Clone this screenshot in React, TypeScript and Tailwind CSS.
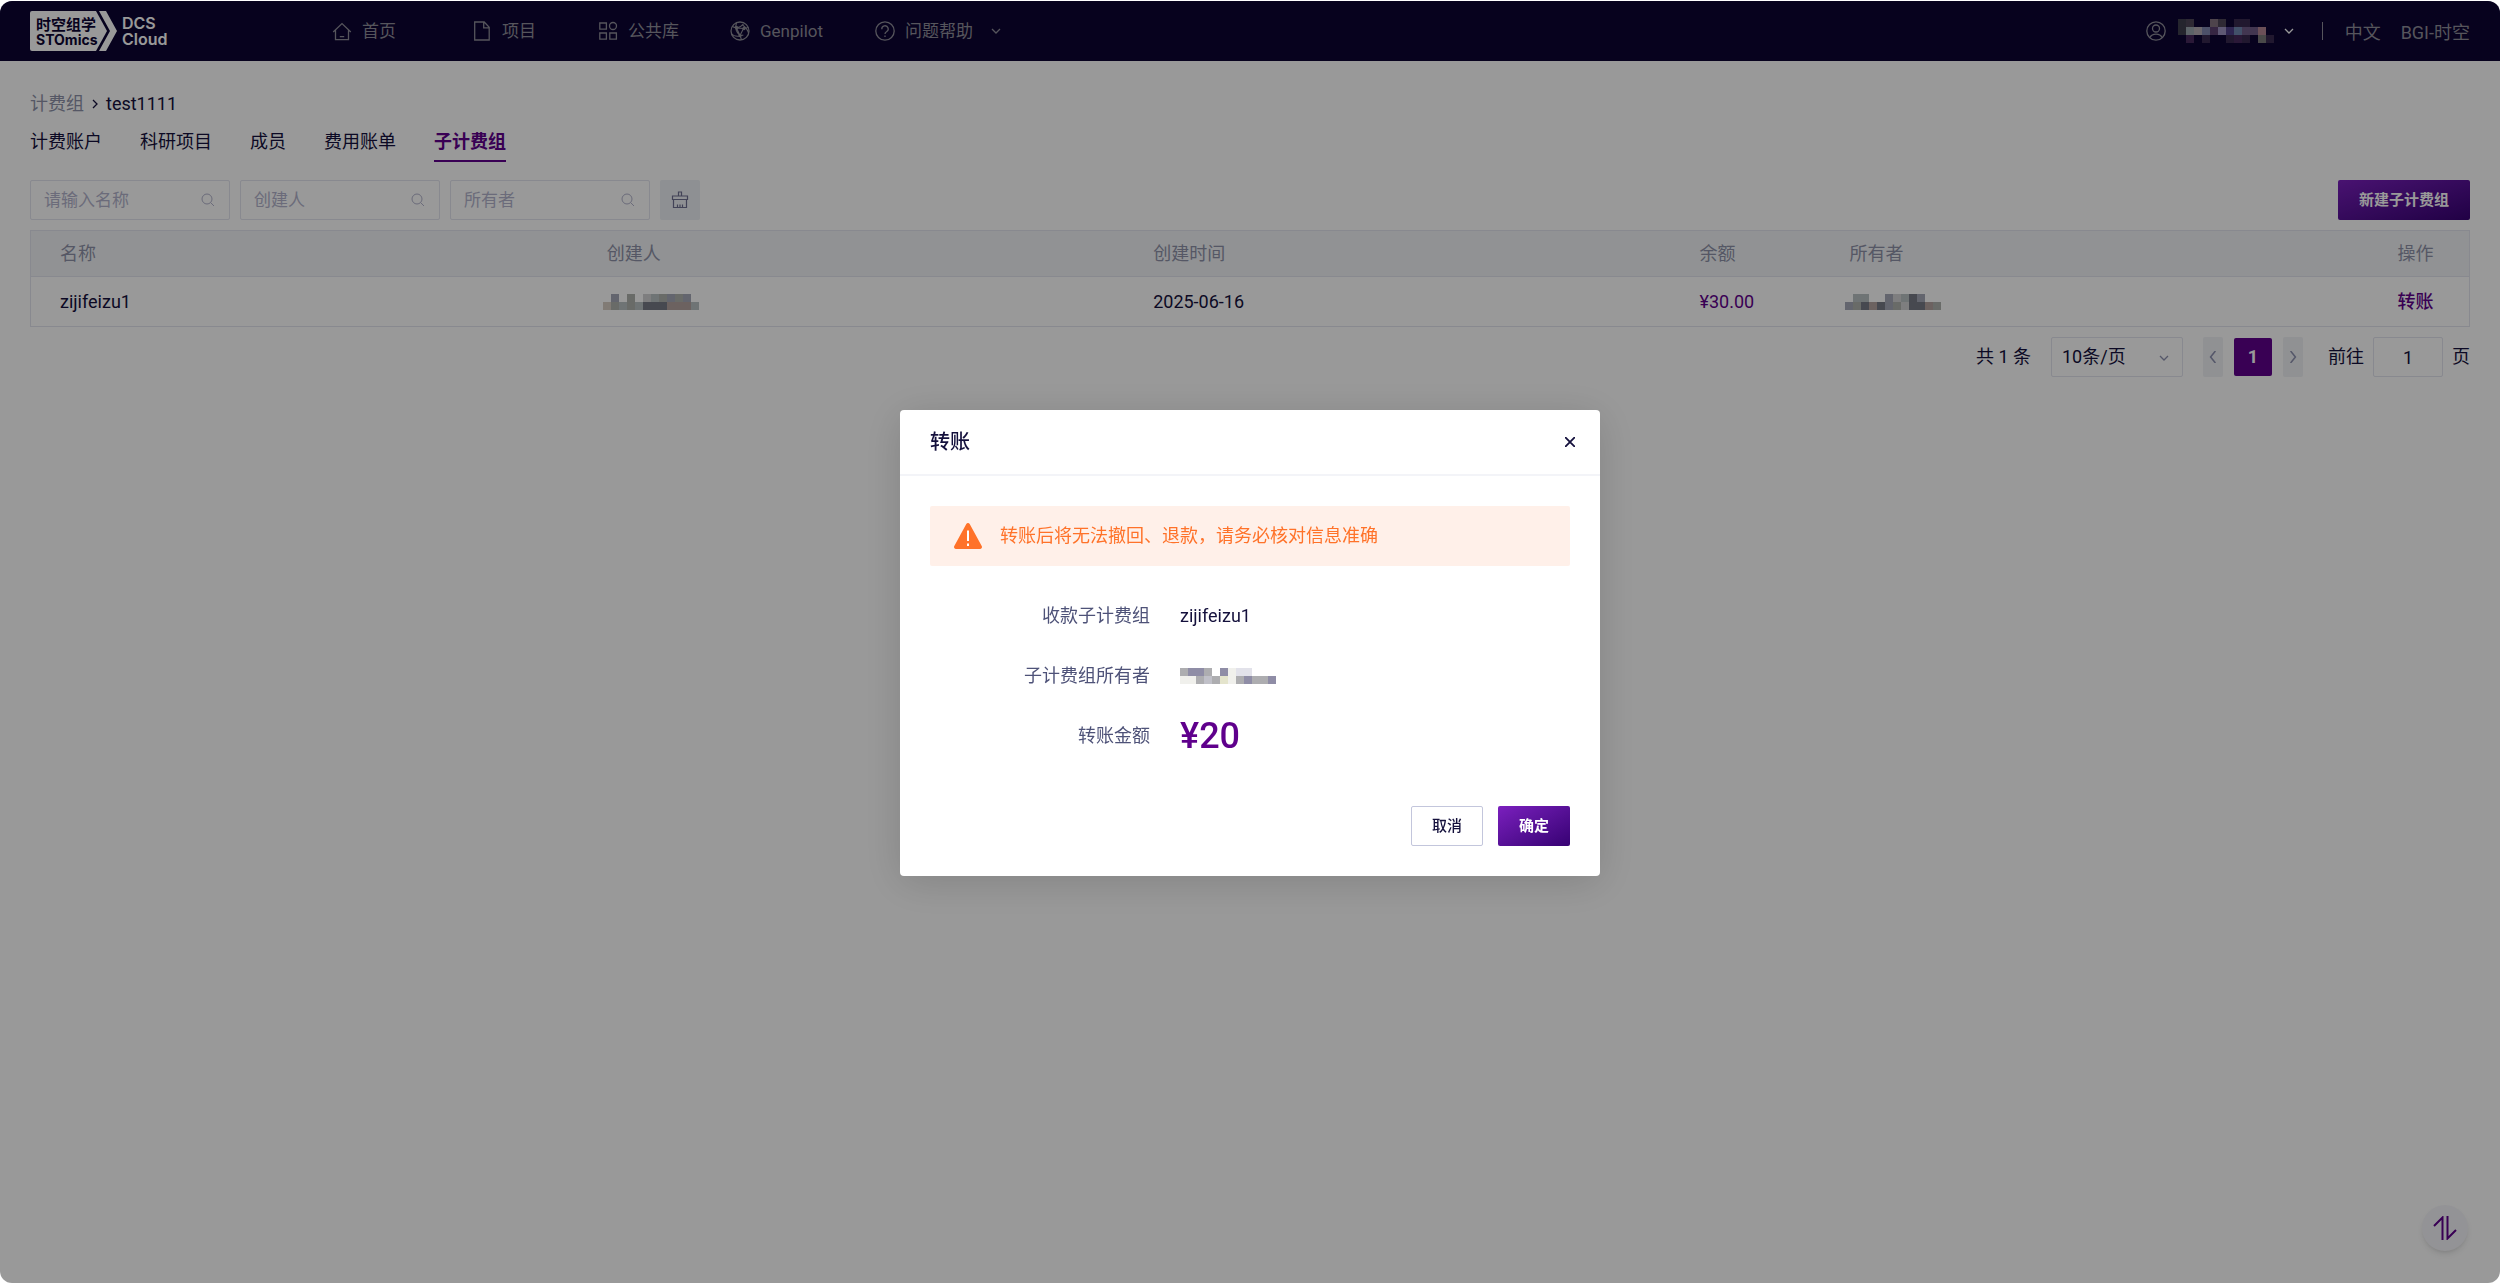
import { ReactNode } from 'react';
import clsx from 'clsx';

const line = { fill: 'none', stroke: 'currentColor', strokeWidth: 1.3 } as const;

const Chevron = ({ className, d = 'M1 1l4 4 4-4', box = '0 0 10 6' }: { className: string; d?: string; box?: string }) => (
  <svg className={className} viewBox={box} {...line}>
    <path d={d} />
  </svg>
);

const SearchIcon = () => (
  <svg className="size-4 shrink-0 text-[#b2b3cc]" viewBox="0 0 16 16" {...line} strokeWidth={1}>
    <circle cx="7" cy="7" r="5" />
    <path d="M10.6 10.6L14 14" />
  </svg>
);

const icons = {
  home: (
    <svg className="size-5" viewBox="0 0 20 20" {...line}>
      <path d="M1.2 11L10 2.6 18.8 11M3.5 9v9.6h13V9M7.8 15.6h4.4" />
    </svg>
  ),
  file: (
    <svg className="size-5" viewBox="0 0 20 20" {...line}>
      <path d="M2.7 1h9.5l5 5.2V19H2.7zM11.7 1.3v5.5h5.3" />
    </svg>
  ),
  grid: (
    <svg className="size-5" viewBox="0 0 20 20" {...line}>
      <path d="M1.8 2h6.6v6.2H1.8zM1.8 12h6.6v6.2H1.8zM11.8 12h6.6v6.2h-6.6z" />
      <circle cx="15" cy="5" r="3.5" />
    </svg>
  ),
  globe: (
    <svg className="size-5" viewBox="0 0 20 20" {...line}>
      <circle cx="10" cy="10" r="9" />
      <path
        d="M2.5 5.5c3 2 7.5 1.5 11-2.7M6.5 2c-1.5 4-.5 9 3.5 12.5M12.5 4c3.5 2.5 5.5 5.5 6 8M1.3 12.5c2.5 3 7 3.5 12 1.5M6.5 7l7 .5-3.5 7zM13.5 7.5l5-1M10 14.5l1.5 4.3"
        strokeWidth="1.1"
      />
      <circle cx="6.5" cy="6.5" r="1" fill="currentColor" />
      <circle cx="14" cy="7.5" r="1" fill="currentColor" />
      <circle cx="10" cy="14.5" r="1" fill="currentColor" />
    </svg>
  ),
  help: (
    <svg className="size-5" viewBox="0 0 20 20" {...line}>
      <circle cx="10" cy="10" r="9.2" />
      <path d="M6.8 8.3a3.2 3.2 0 1 1 4.7 2.5c-1 .6-1.5 1-1.5 2.2M10 14.5v1.5" />
    </svg>
  ),
};

const menu = [
  { text: '首页', icon: icons.home, width: 'w-[140px]' },
  { text: '项目', icon: icons.file, width: 'w-[126px]' },
  { text: '公共库', icon: icons.grid, width: 'w-[132px]' },
  { text: 'Genpilot', icon: icons.globe, width: 'w-[145px]' },
  { text: '问题帮助', icon: icons.help, width: 'w-[130px]', arrow: true },
];

const tabs = ['计费账户', '科研项目', '成员', '费用账单', '子计费组'];

// Masked names, one string per row of 8px blocks, '.' is an empty block
const palettes: Record<string, Record<string, string>> = {
  nav: {
    a: '#3f3e4e', b: '#4d4558', c: '#82727f', d: '#9aa6ad', e: '#b2aab2', f: '#7f85ad', g: '#5a4070', h: '#9d93c1',
    i: '#4d3e88', j: '#6e85b0', k: '#6e5a88', l: '#b28593', m: '#46285d', n: '#38294f', o: '#7b7b7b',
  },
  grey: { a: '#d8cdc4', b: '#afb2ad', c: '#e4e4e4', d: '#777a86', e: '#b9c1c4', f: '#b4a3a0', g: '#a5a8b8', h: '#d2d2d4' },
  light: { a: '#f0f0ec', b: '#adadb0', c: '#e4e4cc', d: '#8f8da6', e: '#c0c0c8', g: '#e2e2ea' },
};

const Mosaic = ({ rows, palette, label }: { rows: string[]; palette: string; label: string }) => (
  <svg
    className="block"
    role="img"
    aria-label={label}
    width={rows[0].length * 8}
    height={rows.length * 8}
    shapeRendering="crispEdges">
    {rows.flatMap((row, y) =>
      [...row].map((c, x) =>
        c === '.' ? null : <rect key={`${x}-${y}`} x={x * 8} y={y * 8} width="8" height="8" fill={palettes[palette][c]} />
      )
    )}
  </svg>
);

const Logo = () => (
  <svg className="h-10 w-[138px] shrink-0" viewBox="0 0 138 40" role="img" aria-label="STOmics DCS Cloud">
    <path d="M2 0h64l11 20-11 20H2a2 2 0 0 1-2-2V2a2 2 0 0 1 2-2z" fill="#fff" />
    <path d="M69 0h7l11 20-11 20h-7l11-20z" fill="#fff" />
    <g fontFamily="Inter, 'Noto Sans CJK SC', sans-serif" fontWeight="600">
      <text x="6" y="19" fontSize="15" fontWeight="700" fill="#0c0433">时空组学</text>
      <text x="6" y="34" fontSize="14" fontWeight="700" fill="#0c0433">STOmics</text>
      <text x="92" y="18" fontSize="16" fill="#fff">DCS</text>
      <text x="92" y="34" fontSize="16" fill="#fff">Cloud</text>
    </g>
  </svg>
);

const Header = () => (
  <header className="flex h-[60px] items-center rounded-t-xl bg-[#0c0433] px-[30px] text-[17px] text-[#8f8e99]">
    <Logo />
    <nav className="ml-[164px] flex">
      {menu.map(({ text, icon, width, arrow }) => (
        <a key={text} href="#" className={clsx('flex shrink-0 items-center gap-2.5 whitespace-nowrap', width)}>
          {icon}
          {text}
          {arrow && <Chevron className="ml-2 h-1.5 w-2.5 shrink-0" />}
        </a>
      ))}
    </nav>
    <div className="ml-auto flex items-center">
      <svg className="size-5" viewBox="0 0 20 20" {...line}>
        <circle cx="10" cy="10" r="9.2" />
        <circle cx="10" cy="7.5" r="3.5" />
        <path d="M4 16.5c2-4.5 10-4.5 12 0" />
      </svg>
      <div className="ml-3">
        <Mosaic palette="nav" label="用户" rows={['ab..cb.nn...', 'adefghijkkl.', '.m.n..nmn.on']} />
      </div>
      <Chevron className="ml-2.5 h-1.5 w-2.5 text-white" />
      <span className="ml-7 h-[18px] w-px bg-[#8f8e99]" />
      <div className="ml-[22px] flex gap-5 pt-1 text-lg">
        <a href="#">中文</a>
        <a href="#">BGI-时空</a>
      </div>
    </div>
  </header>
);

const SearchBox = ({ placeholder }: { placeholder: string }) => (
  <label className="flex h-10 w-[200px] items-center rounded-xs border border-[#e3e5ef] px-[13px] text-[17px]">
    <input
      className="w-full min-w-0 bg-transparent outline-none placeholder:text-[#b2b3cc]"
      aria-label={placeholder}
      placeholder={placeholder}
    />
    <SearchIcon />
  </label>
);

const Filters = () => (
  <div className="mt-[18px] flex items-center gap-2.5">
    <SearchBox placeholder="请输入名称" />
    <SearchBox placeholder="创建人" />
    <SearchBox placeholder="所有者" />
    <button aria-label="清空" className="grid size-10 place-items-center rounded-xs bg-[#edf0f5] text-[#6e7191]">
      <svg className="size-[18px]" viewBox="0 0 18 18" {...line} strokeWidth={1.2}>
        <path d="M7.5 5V1h3v4M1.5 5h15v3.5h-15zM2.5 8.5v8h13v-8M6.5 16.5v-3M9 16.5v-3M11.5 16.5v-3" />
      </svg>
    </button>
    <button className="ml-auto h-10 w-[132px] rounded-xs bg-linear-to-br from-[#7b1fbe] to-[#370273] text-[15px] font-bold text-white">
      新建子计费组
    </button>
  </div>
);

const GroupTable = () => (
  <table className="mt-2.5 w-full table-fixed border border-[#e3e5ef] text-left">
    <colgroup>
      <col className="w-[22.4%]" />
      <col className="w-[22.4%]" />
      <col className="w-[22.4%]" />
      <col className="w-[150px]" />
      <col />
      <col className="w-[102px]" />
    </colgroup>
    <thead className="border-b border-[#e3e5ef] bg-[#f2f4f7] text-[#8e92a8]">
      <tr className="h-[46px]">
        {['名称', '创建人', '创建时间', '余额', '所有者', '操作'].map((name) => (
          <th key={name} className="pl-[30px] font-normal first:pl-[29px]">{name}</th>
        ))}
      </tr>
    </thead>
    <tbody>
      <tr className="h-[50px]">
        <td className="pl-[29px]">zijifeizu1</td>
        <td className="pl-[26px]">
          <Mosaic palette="grey" label="创建人" rows={['.g.b.hebgbg.', 'abebedddfffe']} />
        </td>
        <td className="pl-[30px]">2025-06-16</td>
        <td className="pl-[30px] text-[#5f008c]">¥30.00</td>
        <td className="pl-[26px]">
          <Mosaic palette="grey" label="所有者" rows={['.ee..ghedg..', 'gbdfdgbhddfb']} />
        </td>
        <td className="pl-[30px]">
          <button className="font-medium text-[#5f008c]">转账</button>
        </td>
      </tr>
    </tbody>
  </table>
);

const Pagination = () => (
  <div className="mt-2.5 flex items-center justify-end">
    <span>共 1 条</span>
    <div className="relative ml-5">
      <select aria-label="每页条数" className="h-10 w-[132px] appearance-none rounded-xs border border-[#e3e5ef] px-2.5">
        <option>10条/页</option>
      </select>
      <Chevron className="pointer-events-none absolute top-[18px] right-3.5 h-1.5 w-2.5 text-[#8e92b0]" />
    </div>
    <button aria-label="上一页" className="ml-5 grid h-10 w-5 place-items-center rounded-xs bg-[#f0f2f6] text-[#8e92b0]">
      <Chevron className="h-3 w-2" box="0 0 6 10" d="M5 0L1 5l4 5" />
    </button>
    <button className="ml-[11px] size-[38px] rounded-xs bg-[#5f008c] font-bold text-white">1</button>
    <button aria-label="下一页" className="ml-[11px] grid h-10 w-5 place-items-center rounded-xs bg-[#f0f2f6] text-[#8e92b0]">
      <Chevron className="h-3 w-2" box="0 0 6 10" d="M1 0l4 5-4 5" />
    </button>
    <label className="ml-[25px] flex items-center gap-[9px]">
      前往
      <input className="h-10 w-[70px] rounded-xs border border-[#e3e5ef] text-center" defaultValue="1" />
      页
    </label>
  </div>
);

const Field = ({ label, children }: { label: string; children: ReactNode }) => (
  <div className="flex h-[60px] items-center gap-[30px]">
    <dt className="w-[220px] text-right text-[#4e5278]">{label}</dt>
    <dd>{children}</dd>
  </div>
);

const TransferDialog = () => (
  <div className="fixed inset-x-0 top-px bottom-0 flex items-start justify-center rounded-xl bg-black/40 pt-[409px]">
    <div role="dialog" aria-labelledby="transfer-title" className="w-[700px] rounded-sm bg-white shadow-[0_6px_40px_rgba(0,0,0,0.15)]">
      <div className="flex h-[66px] items-center justify-between border-b-2 border-[#f3f4f8] pr-[25px] pl-[30px]">
        <h2 id="transfer-title" className="text-xl font-medium">转账</h2>
        <button aria-label="关闭">
          <svg className="size-2.5" viewBox="0 0 10 10" {...line} strokeWidth={1.8}>
            <path d="M0 0l10 10M10 0L0 10" />
          </svg>
        </button>
      </div>
      <div className="p-[30px]">
        <div className="flex h-[60px] items-center gap-[18px] rounded-xs bg-[#fff0e9] px-6 text-[#ff7229]">
          <svg className="h-[26px] w-7" viewBox="0 0 28 26">
            <path d="M12.3 1a2 2 0 0 1 3.4 0l12 22a2 2 0 0 1-1.7 3H2a2 2 0 0 1-1.7-3z" fill="currentColor" />
            <path d="M14 7.5V18M14 20.5V23" stroke="#fff" strokeWidth="2" />
          </svg>
          转账后将无法撤回、退款，请务必核对信息准确
        </div>
        <dl className="mt-5">
          <Field label="收款子计费组">zijifeizu1</Field>
          <Field label="子计费组所有者">
            <Mosaic palette="light" label="所有者" rows={['bddb.dagg...', 'aabebcabdbbd']} />
          </Field>
          <Field label="转账金额">
            <span className="text-4xl font-medium text-[#5f008c]">¥20</span>
          </Field>
        </dl>
        <div className="mt-10 flex justify-end gap-[15px] text-[15px]">
          <button className="h-10 w-[72px] rounded-xs border border-[#c3c6dc] font-medium">取消</button>
          <button className="h-10 w-[72px] rounded-xs bg-linear-to-br from-[#7b1fbe] to-[#370273] font-bold text-white">确定</button>
        </div>
      </div>
    </div>
  </div>
);

const App = () => {
  return (
    <div className="min-h-screen bg-white pt-px font-[Roboto,'Noto_Sans_CJK_SC',sans-serif] text-lg leading-6 text-[#14103c]">
      <Header />
      <main className="px-[30px] pt-[31px]">
        <div className="flex items-center gap-2">
          <a href="#" className="text-[#8e92a8]">计费组</a>
          <Chevron className="h-2.5 w-1.5" box="0 0 6 10" d="M1 1l4 4-4 4" />
          <span>test1111</span>
        </div>
        <nav className="mt-3.5 flex gap-[38px]">
          {tabs.map((tab) => (
            <a
              key={tab}
              href="#"
              className={clsx('border-b-2 pb-1.5', tab === '子计费组' ? 'border-[#5f008c] font-bold text-[#5f008c]' : 'border-transparent')}>
              {tab}
            </a>
          ))}
        </nav>
        <Filters />
        <GroupTable />
        <Pagination />
      </main>
      <button
        aria-label="传输列表"
        className="fixed right-8 bottom-8 grid size-[46px] place-items-center rounded-full bg-[#f6f6fa] text-[#5f008c] shadow-md">
        <svg className="size-6" viewBox="0 0 24 24" {...line} strokeWidth={2}>
          <path d="M1 10l8.5-8.5V24M14.5 0v22.5L23 14" />
        </svg>
      </button>
      <TransferDialog />
    </div>
  );
};

export default App;
